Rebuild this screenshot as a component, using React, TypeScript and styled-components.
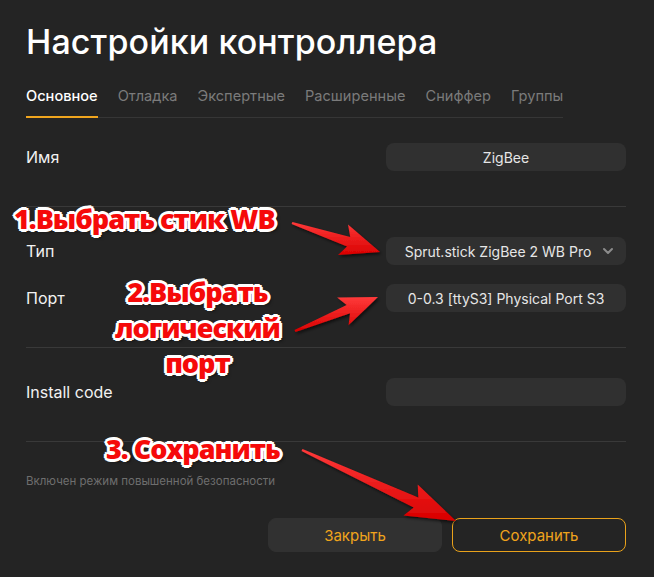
import React from "react";
import styled, { createGlobalStyle } from "styled-components";
import { ChevronDown } from "lucide-react";

const GlobalStyle = createGlobalStyle`
  html, body { margin: 0; padding: 0; background: #242424; }
  body { font-family: Inter, "Noto Sans", sans-serif; color: #ececec; }
  * { box-sizing: border-box; }
`;

const Page = styled.div`
  position: relative;
  width: 654px;
  height: 577px;
  padding: 22px 28px 0 26px;
  background: #242424;
  overflow: hidden;
`;

const Title = styled.h1`
  margin: 0;
  font-size: 34px;
  line-height: 40px;
  font-weight: 500;
  color: #ffffff;
  letter-spacing: 0.1px;
`;

const Tabs = styled.nav`
  display: inline-flex;
  gap: 20px;
  margin-top: 24px;
  border-bottom: 1px solid #363636;
`;

const Tab = styled.div<{ $active?: boolean }>`
  font-size: 14.6px;
  line-height: 20px;
  padding-bottom: 10px;
  margin-bottom: -1px;
  color: ${(p) => (p.$active ? "#ffffff" : "#7b7b7b")};
  font-weight: ${(p) => (p.$active ? 500 : 400)};
  border-bottom: 2px solid ${(p) => (p.$active ? "#f0a51e" : "transparent")};
`;

const Section = styled.section<{ $top: number; $bottom: number; $divider?: boolean }>`
  display: flex;
  flex-direction: column;
  gap: 19px;
  padding-top: ${(p) => p.$top}px;
  padding-bottom: ${(p) => p.$bottom}px;
  border-bottom: ${(p) => (p.$divider ? "1px solid #393939" : "none")};
`;

const Row = styled.div`
  display: flex;
  align-items: center;
  justify-content: space-between;
  height: 28px;
`;

const Label = styled.span`
  font-size: 16px;
  color: #f2f2f2;
`;

const Field = styled.div<{ $select?: boolean }>`
  position: relative;
  width: 240px;
  height: 28px;
  border-radius: 8px;
  background: #303030;
  display: flex;
  align-items: center;
  justify-content: center;
  padding-right: ${(p) => (p.$select ? "16px" : "0")};
  font-size: 14px;
  color: #e6e6e6;
  white-space: nowrap;
`;

const Chevron = styled.span`
  position: absolute;
  right: 10px;
  top: 6px;
  display: flex;
  color: #8c8c8c;
`;

const Hint = styled.p`
  margin: 31px 0 0;
  font-size: 11.5px;
  line-height: 16px;
  color: #6e6e6e;
`;

const Actions = styled.div`
  display: flex;
  justify-content: flex-end;
  gap: 10px;
  margin-top: 29px;
`;

const Button = styled.button<{ $outline?: boolean }>`
  width: 174px;
  height: 34px;
  border-radius: 8px;
  font-family: Inter, sans-serif;
  font-size: 15px;
  color: #f0a41c;
  background: ${(p) => (p.$outline ? "transparent" : "#313131")};
  border: 1px solid ${(p) => (p.$outline ? "#e9a21b" : "#313131")};
  cursor: pointer;
`;

const Note = styled.div<{ $x: number; $y: number }>`
  position: absolute;
  left: ${(p) => p.$x}px;
  top: ${(p) => p.$y}px;
  font-family: "Open Sans", sans-serif;
  font-weight: 800;
  font-size: 27px;
  line-height: 35.5px;
  letter-spacing: -1px;
  color: #f50a0a;
  text-align: center;
  white-space: nowrap;
  pointer-events: none;
  text-shadow:
    2px 0 #fff, -2px 0 #fff, 0 2px #fff, 0 -2px #fff,
    2px 2px #fff, -2px -2px #fff, 2px -2px #fff, -2px 2px #fff,
    3px 0 #fff, -3px 0 #fff, 0 3px #fff, 0 -3px #fff,
    3px 3px 3px rgba(0, 0, 0, 0.55);
`;

const Overlay = styled.svg`
  position: absolute;
  left: 0;
  top: 0;
  pointer-events: none;
`;

type Arrow = { t: [number, number]; p: [number, number]; headL: number; headW: number; neckW: number };

function arrowPath(a: Arrow): string {
  const [tx, ty] = a.t;
  const [px, py] = a.p;
  const dx = px - tx;
  const dy = py - ty;
  const L = Math.hypot(dx, dy);
  const ux = dx / L;
  const uy = dy / L;
  const nx = -uy;
  const ny = ux;
  const bx = px - ux * a.headL;
  const by = py - uy * a.headL;
  const pts: [number, number][] = [
    [tx + nx * 1.2, ty + ny * 1.2],
    [bx + nx * a.neckW / 2, by + ny * a.neckW / 2],
    [bx - ux * 6 + nx * a.headW / 2, by - uy * 6 + ny * a.headW / 2],
    [px, py],
    [bx - ux * 6 - nx * a.headW / 2, by - uy * 6 - ny * a.headW / 2],
    [bx - nx * a.neckW / 2, by - ny * a.neckW / 2],
    [tx - nx * 1.2, ty - ny * 1.2],
  ];
  return "M" + pts.map((q) => q[0].toFixed(1) + " " + q[1].toFixed(1)).join(" L") + " Z";
}

const arrows: Arrow[] = [
  { t: [292, 223], p: [380, 252], headL: 33, headW: 32, neckW: 10 },
  { t: [295, 331], p: [378, 297], headL: 32, headW: 30, neckW: 9 },
  { t: [302, 450], p: [456, 521], headL: 44, headW: 34, neckW: 11 },
];

const tabs = ["Основное", "Отладка", "Экспертные", "Расширенные", "Сниффер", "Группы"];

export default function App() {
  return (
    <>
      <GlobalStyle />
      <Page>
        <Title>Настройки контроллера</Title>
        <Tabs>
          {tabs.map((t, i) => (
            <Tab key={t} $active={i === 0}>
              {t}
            </Tab>
          ))}
        </Tabs>

        <Section $top={25} $bottom={35} $divider>
          <Row>
            <Label>Имя</Label>
            <Field>ZigBee</Field>
          </Row>
        </Section>

        <Section $top={30} $bottom={35} $divider>
          <Row>
            <Label>Тип</Label>
            <Field $select>
              Sprut.stick ZigBee 2 WB Pro
              <Chevron>
                <ChevronDown size={16} strokeWidth={3} />
              </Chevron>
            </Field>
          </Row>
          <Row>
            <Label>Порт</Label>
            <Field>0-0.3 [ttyS3] Physical Port S3</Field>
          </Row>
        </Section>

        <Section $top={30} $bottom={35} $divider>
          <Row>
            <Label>Install code</Label>
            <Field />
          </Row>
        </Section>

        <Hint>Включен режим повышенной безопасности</Hint>

        <Actions>
          <Button>Закрыть</Button>
          <Button $outline>Сохранить</Button>
        </Actions>

        <Overlay width={654} height={577} viewBox="0 0 654 577">
          <defs>
            <linearGradient id="ag" x1="0" y1="0" x2="0" y2="1">
              <stop offset="0" stopColor="#ff3a3a" />
              <stop offset="1" stopColor="#d80000" />
            </linearGradient>
            <filter id="as" x="-20%" y="-20%" width="140%" height="140%">
              <feDropShadow dx="1.5" dy="2" stdDeviation="1.5" floodColor="#000" floodOpacity="0.6" />
            </filter>
          </defs>
          {arrows.map((a, i) => (
            <path key={i} d={arrowPath(a)} fill="url(#ag)" filter="url(#as)" />
          ))}
        </Overlay>

        <Note $x={14} $y={201}>1.Выбрать стик WB</Note>
        <Note $x={115} $y={274}>
          2.Выбрать
          <br />
          логический
          <br />
          порт
        </Note>
        <Note $x={106} $y={431}>3. Сохранить</Note>
      </Page>
    </>
  );
}
